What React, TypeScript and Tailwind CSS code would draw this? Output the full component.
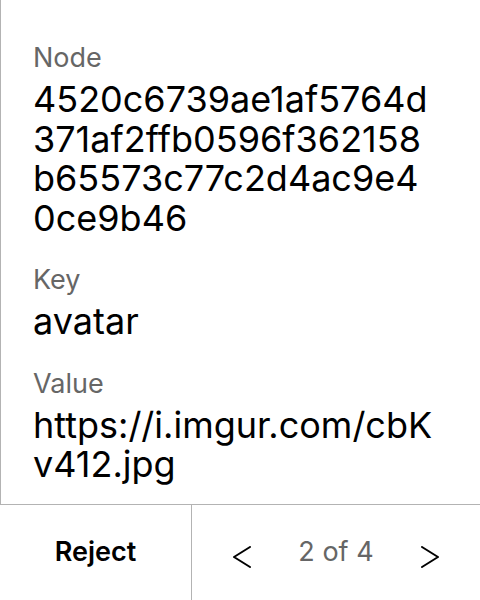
import React from "react";

function Field({ label, value }: { label: string; value: string }) {
  return (
    <div className="flex flex-col gap-1">
      <div className="text-[27px] leading-[36px] text-[#666666]">{label}</div>
      <div className="text-[36px] leading-[39.5px] text-black break-all">{value}</div>
    </div>
  );
}

export default function App() {
  return (
    <div className="w-[480px] h-[600px] flex flex-col bg-white font-['Inter',sans-serif]">
      <div className="flex-1 border-l border-[#b3b3b3] pl-8 pr-[40px] pt-[40px] flex flex-col gap-6">
        <Field label="Node" value="4520c6739ae1af5764d371af2ffb0596f362158b65573c77c2d4ac9e40ce9b46" />
        <Field label="Key" value="avatar" />
        <Field label="Value" value="https://i.imgur.com/cbKv412.jpg" />
      </div>
      <div className="h-[96px] border-t border-[#b3b3b3] flex">
        <div className="w-[192px] border-r border-[#b3b3b3] flex items-center justify-center">
          <span className="text-[27px] font-semibold text-black">Reject</span>
        </div>
        <div className="flex-1 flex items-center justify-between px-[41px]">
          <svg className="mt-2" width="18" height="22" viewBox="0 0 18 22" fill="none" stroke="black" strokeWidth="2" strokeLinecap="round" strokeLinejoin="round">
            <polyline points="17,1 1,11 17,21" />
          </svg>
          <span className="text-[27px] text-[#666666]">2 of 4</span>
          <svg className="mt-2" width="18" height="22" viewBox="0 0 18 22" fill="none" stroke="black" strokeWidth="2" strokeLinecap="round" strokeLinejoin="round">
            <polyline points="1,1 17,11 1,21" />
          </svg>
        </div>
      </div>
    </div>
  );
}
